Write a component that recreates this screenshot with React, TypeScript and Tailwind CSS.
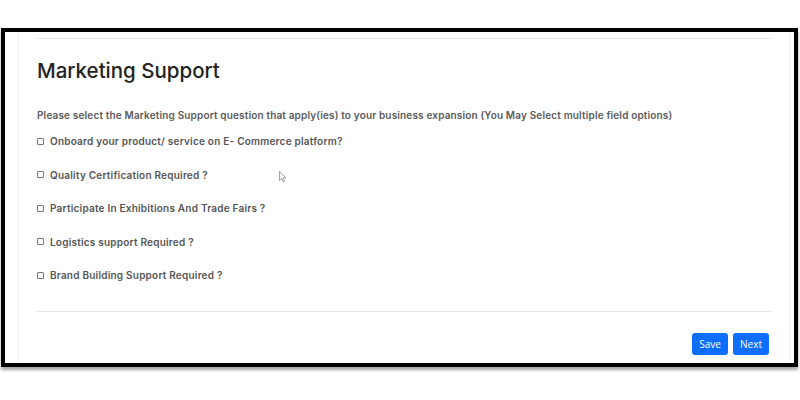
import React from "react";

const items = [
  "Onboard your product/ service on E- Commerce platform?",
  "Quality Certification Required ?",
  "Participate In Exhibitions And Trade Fairs ?",
  "Logistics support Required ?",
  "Brand Building Support Required ?",
];

export default function App() {
  return (
    <div className="w-[800px] h-[400px] bg-white relative overflow-hidden" style={{ fontFamily: "Inter, 'Open Sans', sans-serif" }}>
      <div className="pt-[28px] pl-[1px] pr-[2px]">
        <div className="h-[339px] border-[4px] border-black bg-white shadow-[0_3px_3px_rgba(0,0,0,0.35)] pl-[13px] pr-[4px]">
          <div className="h-full border-x border-[#efefef] px-[18px] pt-[6px] flex flex-col">
            <div className="h-px bg-[#e3e3e3]" />
            <h1 className="mt-[18px] text-[20.5px] leading-[28px] font-medium text-[#222]">Marketing Support</h1>
            <p className="mt-[23px] text-[10px] leading-[14px] font-semibold tracking-[0.16px] text-[#5a5a5a]">
              Please select the Marketing Support question that apply(ies) to your business expansion (You May Select multiple field options)
            </p>
            <div className="mt-[12px] flex flex-col gap-[19.5px]">
              {items.map((t) => (
                <label key={t} className="flex items-center h-[14px]">
                  <span className="w-[7px] h-[7px] border border-[#777] rounded-[1px] mr-[6px] shrink-0" />
                  <span className="text-[10px] leading-[14px] font-semibold tracking-[0.22px] text-[#555]">{t}</span>
                </label>
              ))}
            </div>
            <div className="mt-[29px] h-px bg-[#e3e3e3]" />
            <div className="mt-[21px] flex justify-end gap-[5px] pr-[2px]">
              <button className="h-[22px] w-[36px] rounded-[3px] bg-[#0d6efd] text-white text-[10px]" style={{ fontFamily: "'Open Sans', 'Liberation Sans', sans-serif" }}>Save</button>
              <button className="h-[22px] w-[36px] rounded-[3px] bg-[#0d6efd] text-white text-[10px]" style={{ fontFamily: "'Open Sans', 'Liberation Sans', sans-serif" }}>Next</button>
            </div>
          </div>
        </div>
      </div>
      <svg className="absolute left-[279px] top-[171px]" width="8" height="12" viewBox="0 0 8 12">
        <path d="M0.5 0.5 L0.5 9.5 L2.7 7.5 L4.3 11 L5.6 10.4 L4.1 7 L7 7 Z" fill="white" stroke="#888" strokeWidth="0.8" />
      </svg>
    </div>
  );
}
